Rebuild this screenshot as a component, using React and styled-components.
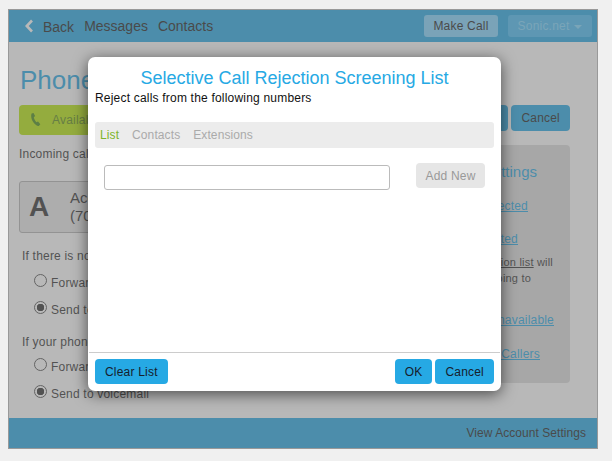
import React from 'react';
import styled, { createGlobalStyle } from 'styled-components';

const BLUE = '#26a9e4';

const GlobalStyle = createGlobalStyle`
  html, body {
    margin: 0;
    background: #f0f0f0;
    font-family: "Liberation Sans", Arial, sans-serif;
    font-size: 12px;
    letter-spacing: 0.2px;
  }
`;

const Frame = styled.div`
  position: relative;
  box-sizing: border-box;
  display: flex;
  flex-direction: column;
  width: 590px;
  height: 440px;
  margin: 9px 0 0 8px;
  border: 1px solid #999;
  background: #fff;
  color: #333;
`;

const Header = styled.header`
  flex: none;
  display: flex;
  align-items: center;
  height: 32px;
  padding: 0 5px 0 15px;
  background: ${BLUE};
  color: #222;
  font-size: 14px;
  letter-spacing: 0;
`;

const NavLink = styled.span`
  margin-right: 10px;
  padding-top: ${(p) => (p.$low ? '2px' : '0')};
`;

const Chevron = styled.svg`
  width: 10px;
  height: 14px;
  margin-right: 9px;
`;

const HeaderButton = styled.button`
  display: flex;
  align-items: center;
  justify-content: center;
  gap: 5px;
  width: ${(p) => p.$width}px;
  height: 22px;
  margin-left: ${(p) => (p.$first ? 'auto' : '10px')};
  padding: 0;
  border: 0;
  border-radius: 3px;
  background: ${(p) => (p.$muted ? '#4abcf4' : '#82d4fe')};
  color: ${(p) => (p.$muted ? '#82d8ff' : '#222')};
  font: inherit;
  font-size: 12px;
  letter-spacing: 0.2px;
`;

const Caret = styled.span`
  border-top: 4px solid currentColor;
  border-left: 4px solid transparent;
  border-right: 4px solid transparent;
  margin-top: 1px;
`;

const Main = styled.main`
  flex: 1;
  min-height: 0;
  display: flex;
  flex-direction: column;
  padding: 22px 27px 0 10px;
`;

const PageTitle = styled.h1`
  margin: 0 0 9px 1px;
  font-size: 26px;
  font-weight: 400;
  line-height: 32px;
  letter-spacing: 0;
  color: ${BLUE};
`;

const Toolbar = styled.div`
  display: flex;
  align-items: flex-start;
  gap: 3px;
`;

const StatusButton = styled.div`
  display: flex;
  align-items: center;
  gap: 10px;
  width: 200px;
  height: 30px;
  margin-right: auto;
  padding-left: 11px;
  box-sizing: border-box;
  border-radius: 4px;
  background: #b6e60a;
  color: #5a8a18;
`;

const ActionButton = styled.button`
  height: 26px;
  padding: 0 10px;
  border: 0;
  border-radius: 4px;
  background: ${BLUE};
  color: #222;
  font: inherit;
  font-size: 12px;
  letter-spacing: 0.2px;
`;

const Columns = styled.div`
  flex: 1;
  min-height: 0;
  display: flex;
  gap: 20px;
  margin-top: 10px;
  margin-bottom: 35px;
`;

const LeftColumn = styled.div`
  flex: 1;
`;

const Intro = styled.p`
  margin: 1px 0 19px;
  line-height: 16px;
`;

const Card = styled.div`
  display: flex;
  align-items: center;
  box-sizing: border-box;
  height: 52px;
  padding-left: 9px;
  border: 1px solid #b4b4b4;
  border-radius: 3px;
  background: #e8e8e8;
`;

const Initial = styled.span`
  width: 41px;
  font-size: 28px;
  font-weight: 700;
`;

const CardText = styled.div`
  font-size: 15px;
  line-height: 18px;
  letter-spacing: 0;
`;

const Question = styled.p`
  margin: ${(p) => p.$top}px 0 ${(p) => p.$bottom}px 3px;
  line-height: 16px;
`;

const RadioRow = styled.label`
  display: flex;
  align-items: center;
  gap: 4px;
  height: 27px;
  padding-left: 15px;
`;

const Radio = styled.input.attrs({ type: 'radio' })`
  appearance: none;
  box-sizing: border-box;
  width: 13px;
  height: 13px;
  margin: -4px 0 0;
  border: 1px solid #555;
  border-radius: 50%;
  background: #fff;
  &:checked {
    background: radial-gradient(circle, #333 0 3.5px, #fff 4px);
  }
`;

const Sidebar = styled.aside`
  width: 190px;
  padding-top: 18px;
  border-radius: 4px;
  background: #ddd;
`;

const SideHeading = styled.h2`
  margin: 0 33px 17px 0;
  font-size: 15px;
  font-weight: 400;
  line-height: 18px;
  letter-spacing: 0;
  text-align: right;
  color: ${BLUE};
`;

const SideLink = styled.a`
  display: block;
  margin: ${(p) => p.$top}px ${(p) => p.$end}px 0 0;
  line-height: 16px;
  text-align: right;
  color: ${BLUE};
  text-decoration: underline;
`;

const SideNote = styled.p`
  margin: 7px 0 0;
  font-size: 11px;
  line-height: 16px;
`;

const NoteLine = styled.span`
  display: block;
  margin-right: ${(p) => p.$end}px;
  text-align: right;
  white-space: nowrap;
`;

const Footer = styled.footer`
  flex: none;
  display: flex;
  align-items: center;
  justify-content: flex-end;
  height: 30px;
  padding-right: 11px;
  background: ${BLUE};
  color: #222;
  letter-spacing: 0.05px;
`;

const Dim = styled.div`
  position: absolute;
  inset: 0;
  background: rgba(114, 114, 114, 0.5);
`;

const Modal = styled.section`
  position: absolute;
  left: 79px;
  top: 47px;
  display: flex;
  flex-direction: column;
  width: 413px;
  height: 334px;
  box-sizing: border-box;
  border-radius: 7px;
  background: #fff;
  box-shadow: 0 3px 15px rgba(0, 0, 0, 0.6);
  color: #111;
`;

const ModalTitle = styled.h2`
  margin: 10px 0 0;
  font-size: 18px;
  font-weight: 400;
  line-height: 22px;
  letter-spacing: 0;
  text-align: center;
  color: ${BLUE};
`;

const ModalHint = styled.p`
  margin: 1px 7px 0;
  line-height: 16px;
`;

const Tabs = styled.nav`
  display: flex;
  align-items: center;
  gap: 13px;
  height: 26px;
  margin: 16px 7px 0;
  padding-left: 5px;
  border-radius: 3px;
  background: #ececec;
  letter-spacing: 0.1px;
`;

const Tab = styled.span`
  color: ${(p) => (p.$active ? '#7db52a' : '#aaa')};
`;

const AddRow = styled.div`
  flex: 1;
  display: flex;
  align-items: flex-start;
  justify-content: space-between;
  padding: 15px 16px 0;
`;

const NumberInput = styled.input`
  box-sizing: border-box;
  width: 286px;
  height: 25px;
  margin-top: 2px;
  border: 1px solid #bbb;
  border-radius: 3px;
`;

const AddButton = styled.button`
  width: 69px;
  height: 25px;
  padding: 0;
  border: 0;
  border-radius: 4px;
  background: #e6e6e6;
  color: #999;
  font: inherit;
  letter-spacing: 0.2px;
`;

const ModalFooter = styled.div`
  flex: none;
  display: flex;
  gap: 3px;
  box-sizing: border-box;
  height: 39px;
  margin: 0 1px;
  padding: 6px 6px 0;
  border-top: 1px solid #ccc;
`;

const ModalButton = styled.button`
  height: 25px;
  margin-right: ${(p) => (p.$push ? 'auto' : '0')};
  padding: 0 10px;
  border: 0;
  border-radius: 4px;
  background: ${BLUE};
  color: #16202c;
  font: inherit;
  letter-spacing: 0.2px;
`;

const App = () => {
  return (
    <>
      <GlobalStyle />
      <Frame>
        <Header>
          <Chevron viewBox="0 0 10 14">
            <path d="M8 1.5 2.8 7 8 12.5" fill="none" stroke="#fff" strokeWidth="2.6" />
          </Chevron>
          <NavLink $low>Back</NavLink>
          <NavLink>Messages</NavLink>
          <NavLink>Contacts</NavLink>
          <HeaderButton $first $width={74}>Make Call</HeaderButton>
          <HeaderButton $muted $width={84}>
            Sonic.net <Caret />
          </HeaderButton>
        </Header>
        <Main>
          <PageTitle>Phone Settings</PageTitle>
          <Toolbar>
            <StatusButton>
              <svg width="12" height="14" viewBox="0 0 12 14">
                <path
                  d="M1.600.6 3.500 0l1.600 3.100-1.300 1.200c.3 1.700 1.200 3.600 2.600 5l1.600-.7 2.300 2.700-1.500 1.600C6.200 14-.6 6.600 1.600.6Z"
                  fill="#488c18"
                />
              </svg>
              Available
            </StatusButton>
            <ActionButton>Save</ActionButton>
            <ActionButton>Cancel</ActionButton>
          </Toolbar>
          <Columns>
            <LeftColumn>
              <Intro>Incoming calls will ring</Intro>
              <Card>
                <Initial>A</Initial>
                <CardText>
                  Account
                  <br />
                  (707) 555-0100
                </CardText>
              </Card>
              <Question $top={15} $bottom={5}>If there is no answer</Question>
              <RadioRow>
                <Radio name="answer" />
                Forward to
              </RadioRow>
              <RadioRow>
                <Radio name="answer" defaultChecked />
                Send to voicemail
              </RadioRow>
              <Question $top={11} $bottom={3}>If your phone is busy</Question>
              <RadioRow>
                <Radio name="busy" />
                Forward to
              </RadioRow>
              <RadioRow>
                <Radio name="busy" defaultChecked />
                Send to voicemail
              </RadioRow>
            </LeftColumn>
            <Sidebar>
              <SideHeading>Call Settings</SideHeading>
              <SideLink $top={0} $end={42}>Forward Selected</SideLink>
              <SideLink $top={17} $end={52}>Block Selected</SideLink>
              <SideNote>
                <NoteLine $end={17}>
                  Your <u>rejection list</u> will
                </NoteLine>
                <NoteLine $end={39}>stop callers going to</NoteLine>
              </SideNote>
              <SideLink $top={26} $end={16}>When Unavailable</SideLink>
              <SideLink $top={18} $end={30}>Anonymous Callers</SideLink>
            </Sidebar>
          </Columns>
        </Main>
        <Footer>View Account Settings</Footer>
        <Dim />
        <Modal>
          <ModalTitle>Selective Call Rejection Screening List</ModalTitle>
          <ModalHint>Reject calls from the following numbers</ModalHint>
          <Tabs>
            <Tab $active>List</Tab>
            <Tab>Contacts</Tab>
            <Tab>Extensions</Tab>
          </Tabs>
          <AddRow>
            <NumberInput />
            <AddButton>Add New</AddButton>
          </AddRow>
          <ModalFooter>
            <ModalButton $push>Clear List</ModalButton>
            <ModalButton>OK</ModalButton>
            <ModalButton>Cancel</ModalButton>
          </ModalFooter>
        </Modal>
      </Frame>
    </>
  );
};

export default App;
